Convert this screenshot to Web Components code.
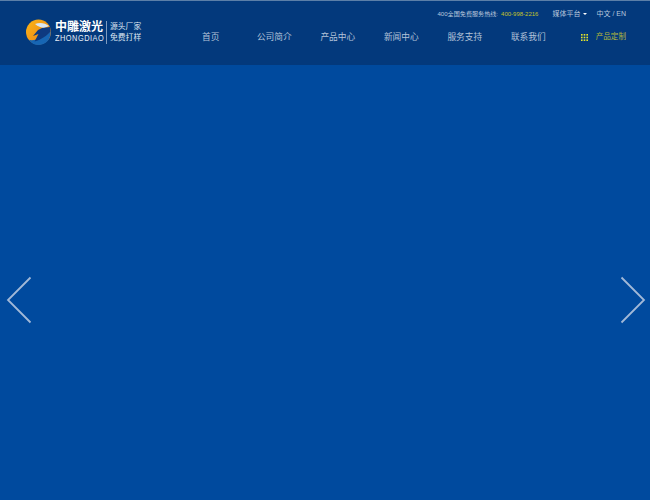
<!DOCTYPE html>
<html><head><meta charset="utf-8"><style>
html,body{margin:0;padding:0;width:650px;height:500px;overflow:hidden;background:#004a9e}
site-page{display:block;width:650px;height:500px}
</style></head><body>
<site-page>
<site-logo slot="logo"></site-logo>
<top-bar slot="top"></top-bar>
<main-nav slot="nav"></main-nav>
</site-page>
<script>
const F='"Liberation Sans","Noto Sans CJK SC",sans-serif';
const def=(n,html)=>customElements.define(n,class extends HTMLElement{constructor(){super();this.attachShadow({mode:'open'}).innerHTML=html}});
def('site-page',`<style>
:host{display:block;background:#004a9e;font-family:${F}}
header{height:64px;background:#03397c;border-top:1px solid #5c7fa8;display:flex;padding:0 24px 0 26px}
.right{flex:1;display:flex;flex-direction:column;min-width:0}
.stage{height:435px;box-sizing:border-box;display:flex;align-items:flex-start;justify-content:space-between;padding:211px 4px 0 6px}
.stage svg{display:block;width:26px;height:48px}
</style>
<header><slot name="logo"></slot><div class="right"><slot name="top"></slot><slot name="nav"></slot></div></header>
<div class="stage">
<svg viewBox="0 0 26 48"><path d="M24.500 1.500 2 24l22.500 22.500" fill="none" stroke="#a2b9d8" stroke-width="1.800"/></svg>
<svg viewBox="0 0 26 48"><path d="M1.500 1.500 24 24 1.500 46.500" fill="none" stroke="#a2b9d8" stroke-width="1.800"/></svg>
</div>`);
def('site-logo',`<style>
:host{display:block;width:152px;flex:none}
.w{display:flex;align-items:center;height:26px;margin-top:18px}
svg{width:25px;height:26px;flex:none;display:block}
.n{margin-left:4px;width:49px;color:#fff;flex:none}
.a{font:700 12px/13px ${F};white-space:nowrap}
.b{font:7.400px/10px ${F};letter-spacing:.5px;white-space:nowrap;color:#e6edf6;transform:scaleY(1.2);transform-origin:0 50%}
.s{margin-left:2px;padding-left:3px;border-left:1px solid #7f9cc0;color:#dfe7f2;font:7.800px/11.500px ${F};height:23px;white-space:nowrap;flex:none}
</style><div class="w">
<svg viewBox="0 0 25 26"><defs><linearGradient id="g" x1="0" y1="0" x2="1" y2="1"><stop offset="0" stop-color="#fbb615"/><stop offset="1" stop-color="#ea7d18"/></linearGradient></defs>
<circle cx="12.500" cy="13" r="12.500" fill="url(#g)"/>
<path d="M3 21c8 1 16-3 21.500-9 1 8-4.500 14-12 14-4 0-7.500-2-9.500-5z" fill="#1766b4"/>
<path d="M9 5c5-2 10-1 14 2l-5 2c-3-1-6-1-9-4z" fill="#d9e6f2"/>
<path d="M16 9l8-1c.6 1.500.8 3 .5 4.500-3.500 4-9 8-16 10l4-7.500-5.500 2 5-6z" fill="#0e3a80"/></svg>
<div class="n"><div class="a">中雕激光</div><div class="b">ZHONGDIAO</div></div>
<div class="s">源头厂家<br>免费打样</div></div>`);
def('top-bar',`<style>
:host{display:flex;justify-content:flex-end;height:25.500px;align-items:center;color:#b9c8dc;font:6.100px/1 ${F};white-space:nowrap}
.y{color:#c3c32a;margin-left:3px;font-size:6px}
.m{margin-left:14px;font-size:7px;display:flex;align-items:center}
.m i{width:0;height:0;border:2px solid transparent;border-top:2.500px solid #fff;border-bottom:0;margin-left:3px}
.l{margin-left:9px;font-size:7px}
</style><span>400全国免费服务热线:</span><span class="y">400-998-2216</span><span class="m">媒体平台<i></i></span><span class="l">中文 / EN</span>`);
def('main-nav',`<style>
:host{display:flex;height:21px;align-items:center;color:#b3c3d9;font:8.700px/1 ${F};white-space:nowrap;margin-left:1px}
span{flex:none;width:63.500px;text-align:center}
.c{margin-left:auto;display:flex;align-items:center;color:#b4b83a;font-size:7.600px}
svg{width:7px;height:7px;margin-right:8px;display:block}
</style><span>首页</span><span>公司简介</span><span>产品中心</span><span>新闻中心</span><span>服务支持</span><span>联系我们</span>
<div class="c"><svg viewBox="0 0 7 7" fill="#e6e62a"><rect width="1.600" height="1.600"/><rect x="2.700" width="1.600" height="1.600"/><rect x="5.400" width="1.600" height="1.600"/><rect y="2.700" width="1.600" height="1.600"/><rect x="2.700" y="2.700" width="1.600" height="1.600"/><rect x="5.400" y="2.700" width="1.600" height="1.600"/><rect y="5.400" width="1.600" height="1.600"/><rect x="2.700" y="5.400" width="1.600" height="1.600"/><rect x="5.400" y="5.400" width="1.600" height="1.600"/></svg>产品定制</div>`);
</script></body></html>
